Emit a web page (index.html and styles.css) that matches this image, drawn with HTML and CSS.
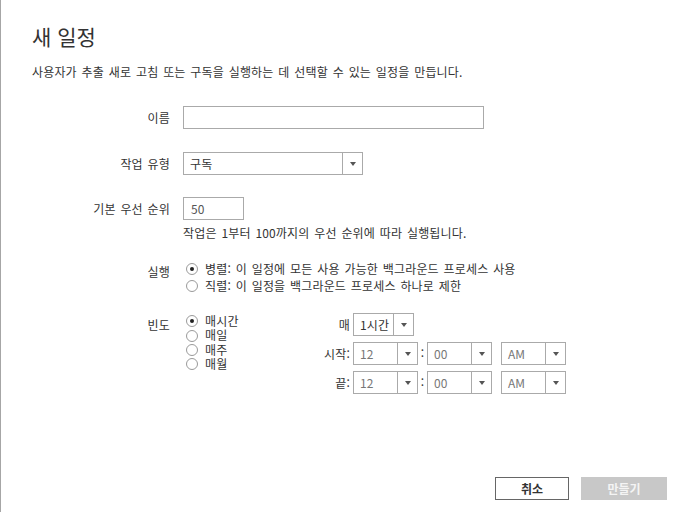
FILE: index.html
```html
<!DOCTYPE html>
<html lang="ko">
<head>
    <meta charset="UTF-8">
    <meta name="viewport" content="width=device-width, initial-scale=1.0">
    <title>새 일정</title>
    <link rel="stylesheet" href="styles.css">
</head>
<body>
    <div class="page">
        <h1 class="title">새 일정</h1>
        <p class="intro">사용자가 추출 새로 고침 또는 구독을 실행하는 데 선택할 수 있는 일정을 만듭니다.</p>

        <!-- 이름 -->
        <div class="row row-name">
            <label class="label">이름</label>
            <div class="field">
                <input class="textbox textbox-name" type="text">
            </div>
        </div>

        <!-- 작업 유형 -->
        <div class="row row-type">
            <label class="label">작업 유형</label>
            <div class="field">
                <div class="dropdown dropdown-type">
                    <span class="dropdown-text">구독</span>
                    <span class="dropdown-btn"></span>
                </div>
            </div>
        </div>

        <!-- 우선 순위 -->
        <div class="row row-priority">
            <label class="label">기본 우선 순위</label>
            <div class="field">
                <input class="textbox textbox-priority" type="text" value="50">
                <div class="hint">작업은 1부터 100까지의 우선 순위에 따라 실행됩니다.</div>
            </div>
        </div>

        <!-- 실행 -->
        <div class="row row-run">
            <label class="label">실행</label>
            <div class="field options options-run">
                <div class="option"><span class="radio checked"></span>병렬: 이 일정에 모든 사용 가능한 백그라운드 프로세스 사용</div>
                <div class="option"><span class="radio"></span>직렬: 이 일정을 백그라운드 프로세스 하나로 제한</div>
            </div>
        </div>

        <!-- 빈도 -->
        <div class="row row-freq">
            <label class="label">빈도</label>
            <div class="field freq">
                <div class="options options-freq">
                    <div class="option"><span class="radio checked"></span>매시간</div>
                    <div class="option"><span class="radio"></span>매일</div>
                    <div class="option"><span class="radio"></span>매주</div>
                    <div class="option"><span class="radio"></span>매월</div>
                </div>
                <div class="schedule">
                    <span class="sched-label">매</span>
                    <div class="dropdown dropdown-every">
                        <span class="dropdown-text">1시간</span>
                        <span class="dropdown-btn"></span>
                    </div>

                    <span class="sched-label">시작:</span>
                    <div class="time">
                        <div class="dropdown dropdown-time muted">
                            <span class="dropdown-text">12</span>
                            <span class="dropdown-btn"></span>
                        </div>
                        <span class="colon">:</span>
                        <div class="dropdown dropdown-time muted">
                            <span class="dropdown-text">00</span>
                            <span class="dropdown-btn"></span>
                        </div>
                        <div class="dropdown dropdown-time dropdown-ampm muted">
                            <span class="dropdown-text">AM</span>
                            <span class="dropdown-btn"></span>
                        </div>
                    </div>

                    <span class="sched-label">끝:</span>
                    <div class="time">
                        <div class="dropdown dropdown-time muted">
                            <span class="dropdown-text">12</span>
                            <span class="dropdown-btn"></span>
                        </div>
                        <span class="colon">:</span>
                        <div class="dropdown dropdown-time muted">
                            <span class="dropdown-text">00</span>
                            <span class="dropdown-btn"></span>
                        </div>
                        <div class="dropdown dropdown-time dropdown-ampm muted">
                            <span class="dropdown-text">AM</span>
                            <span class="dropdown-btn"></span>
                        </div>
                    </div>
                </div>
            </div>
        </div>

        <!-- 버튼 -->
        <div class="footer">
            <button class="btn btn-cancel">취소</button>
            <button class="btn btn-create">만들기</button>
        </div>
    </div>
</body>
</html>
```

FILE: styles.css
```css
/* 기본 */
body {
    margin: 0;
    background-color: #fff;
    color: #333;
    font-family: "Noto Sans CJK KR", sans-serif;
    font-size: 12px;
    letter-spacing: 0.15px;
    word-spacing: 1.3px;
}

.page {
    height: 512px;
    box-sizing: border-box;
    border-left: 1px solid #a6a6a6;
    padding: 0 29px 12px 31px;
    display: flex;
    flex-direction: column;
}

.title {
    margin: 21px 0 0;
    font-size: 21px;
    font-weight: normal;
    line-height: 30px;
    letter-spacing: 0;
    word-spacing: 0;
}

.intro {
    margin: 13px 0 0;
    line-height: 16px;
}

/* 폼 행 */
.row {
    display: grid;
    grid-template-columns: 138px 1fr;
    column-gap: 13px;
    align-items: start;
}

.label {
    text-align: right;
    line-height: 23px;
}

.row-name { margin-top: 26px; }
.row-type { margin-top: 23px; }
.row-priority { margin-top: 22px; }
.row-run { margin-top: 19px; }
.row-freq { margin-top: 19px; }

/* 입력 상자 */
.textbox {
    display: block;
    height: 23px;
    box-sizing: border-box;
    border: 1px solid #aaa;
    padding: 0 7px;
    margin: 0;
    font-family: inherit;
    font-size: 12px;
    letter-spacing: 0;
    color: #555;
    outline: none;
}
.textbox-name { width: 301px; }
.textbox-priority { width: 61px; }

.hint {
    margin-top: 5px;
    line-height: 16px;
}

/* 드롭다운 */
.dropdown {
    display: flex;
    height: 23px;
    box-sizing: border-box;
    border: 1px solid #aaa;
    background-color: #fff;
}
.dropdown-text {
    flex: 1;
    padding-left: 6px;
    line-height: 21px;
    white-space: nowrap;
}
.dropdown-btn {
    width: 19px;
    border-left: 1px solid #aaa;
    display: flex;
    align-items: center;
    justify-content: center;
}
.dropdown-btn::after {
    content: "";
    border-top: 4px solid #555;
    border-left: 3px solid transparent;
    border-right: 3px solid transparent;
}
.dropdown-type { width: 180px; }
.dropdown-every { width: 61px; }
.dropdown-time { width: 65px; }
.dropdown-ampm { margin-left: 9px; }
.muted .dropdown-text {
    color: #777;
    letter-spacing: 0;
}

/* 라디오 */
.options-run { line-height: 17px; }
.options-freq {
    width: 130px;
    padding-top: 1px;
    line-height: 14.4px;
}
.option {
    display: flex;
    align-items: center;
    white-space: nowrap;
}
.radio {
    flex: none;
    width: 12px;
    height: 12px;
    box-sizing: border-box;
    margin: 0 7px 0 3px;
    border: 1px solid #9a9a9a;
    border-radius: 50%;
    display: flex;
    align-items: center;
    justify-content: center;
}
.radio.checked::after {
    content: "";
    width: 4px;
    height: 4px;
    border-radius: 50%;
    background-color: #222;
}

/* 빈도 일정 */
.freq {
    display: flex;
    align-items: flex-start;
}
.schedule {
    display: grid;
    grid-template-columns: 37px auto;
    column-gap: 3px;
    row-gap: 6px;
    align-items: center;
}
.sched-label {
    text-align: right;
}
.time {
    display: flex;
}
.colon {
    width: 9px;
    text-align: center;
    line-height: 21px;
}

/* 버튼 */
.footer {
    margin-top: auto;
    display: flex;
    justify-content: flex-end;
    gap: 12px;
}
.btn {
    height: 23px;
    box-sizing: border-box;
    padding: 0;
    font-family: inherit;
    font-size: 12px;
    font-weight: bold;
    letter-spacing: 0;
    line-height: 21px;
}
.btn-cancel {
    width: 74px;
    border: 1px solid #666;
    background-color: #fff;
    color: #333;
}
.btn-create {
    width: 86px;
    border: 1px solid #c8c8c8;
    background-color: #c8c8c8;
    color: #f4f4f4;
}
```
